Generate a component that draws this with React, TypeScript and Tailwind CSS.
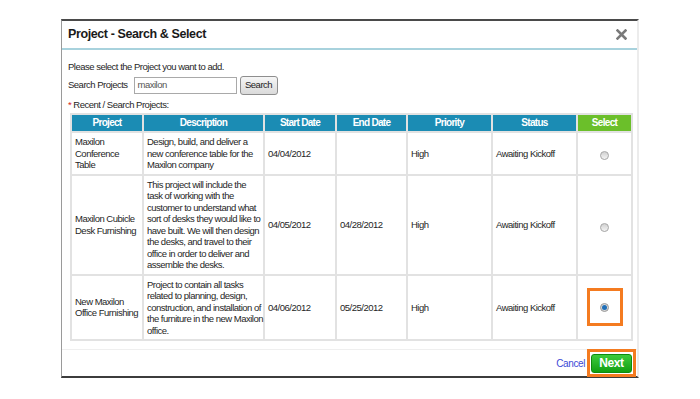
const font = "font-['Liberation_Sans',Arial,sans-serif]";

type Project = {
  name: string[];
  description: string[];
  start: string;
  end: string;
  priority: string;
  status: string;
  selected?: boolean;
};

// line breaks follow the screenshot
const projects: Project[] = [
  {
    name: ["Maxilon", "Conference", "Table"],
    description: ["Design, build, and deliver a", "new conference table for the", "Maxilon company"],
    start: "04/04/2012",
    end: "",
    priority: "High",
    status: "Awaiting Kickoff",
  },
  {
    name: ["Maxilon Cubicle", "Desk Furnishing"],
    description: [
      "This project will include the",
      "task of working with the",
      "customer to understand what",
      "sort of desks they would like to",
      "have built. We will then design",
      "the desks, and travel to their",
      "office in order to deliver and",
      "assemble the desks.",
    ],
    start: "04/05/2012",
    end: "04/28/2012",
    priority: "High",
    status: "Awaiting Kickoff",
  },
  {
    name: ["New Maxilon", "Office Furnishing"],
    description: [
      "Project to contain all tasks",
      "related to planning, design,",
      "construction, and installation of",
      "the furniture in the new Maxilon",
      "office.",
    ],
    start: "04/06/2012",
    end: "05/25/2012",
    priority: "High",
    status: "Awaiting Kickoff",
    selected: true,
  },
];

function Lines({ lines }: { lines: string[] }) {
  return (
    <>
      {lines.map((l) => (
        <span key={l} className="block whitespace-nowrap">
          {l}
        </span>
      ))}
    </>
  );
}

function Radio({ checked }: { checked?: boolean }) {
  if (checked) {
    return (
      <span className="flex h-[9px] w-[9px] items-center justify-center rounded-full border border-[#9a9a9a] bg-[#d8d8d8]">
        <span className="h-[5px] w-[5px] rounded-full bg-[#1f6fb8]" />
      </span>
    );
  }
  return <span className="block h-[9px] w-[9px] rounded-full border border-[#a8a8a8] bg-gradient-to-b from-[#d0d0d0] to-[#f4f4f4]" />;
}

function Row({ p }: { p: Project }) {
  const cell = "border-2 border-[#e2e2e2] px-[3px] py-[3px] align-middle";
  return (
    <tr>
      <td className={cell}>
        <Lines lines={p.name} />
      </td>
      <td className={cell}>
        <Lines lines={p.description} />
      </td>
      <td className={cell}>{p.start}</td>
      <td className={cell}>{p.end}</td>
      <td className={cell}>{p.priority}</td>
      <td className={`${cell} whitespace-nowrap`}>{p.status}</td>
      <td className={`${cell} text-center`}>
        {p.selected ? (
          <span className="inline-flex h-[38px] w-[36px] items-center justify-center border-[3px] border-[#f47b20] align-middle">
            <Radio checked />
          </span>
        ) : (
          <span className="inline-flex translate-y-[2px] align-middle">
            <Radio />
          </span>
        )}
      </td>
    </tr>
  );
}

export default function App() {
  const th = "border-2 border-[#e2e2e2] h-[18px] px-[2px] text-center font-bold text-white";
  return (
    <div className={`h-[399px] w-[700px] bg-white pl-[61px] pt-[19px] ${font}`}>
      <div className="flex h-[359px] w-[578px] flex-col border-b-2 border-l border-r-2 border-t-2 border-b-[#3c3c3c] border-l-[#9a9a9a] border-r-[#ececec] border-t-[#4a4a4a]">
        <div className="flex h-[29px] shrink-0 items-center justify-between border-b-2 border-[#a8d2dd] pl-[6px] pr-[10px]">
          <span className="text-[12.5px] font-bold tracking-[-0.4px] text-[#1a1a1a]">Project - Search &amp; Select</span>
          <svg width="11" height="11" viewBox="0 0 11 11">
            <path d="M1.5 1.5 L9.5 9.5 M9.5 1.5 L1.5 9.5" stroke="#7a7a7a" strokeWidth="2.6" strokeLinecap="square" />
          </svg>
        </div>

        <div className="flex shrink-0 flex-col pl-[6px] pt-[11px] text-[9.5px] leading-[11.5px] tracking-[-0.5px] text-[#262626]">
          <p>Please select the Project you want to add.</p>
          <div className="mt-[3px] flex h-[19px] items-center">
            <span>Search Projects</span>
            <div className="ml-[6px] flex h-[17px] w-[103px] items-center border border-[#a9a9a9] pl-[3px] text-[#555]">
              maxilon
            </div>
            <button className="ml-[3px] h-[19px] w-[38px] rounded-[3px] border border-[#8e8e8e] bg-gradient-to-b from-[#f6f6f6] to-[#dadada] text-[9.5px] tracking-[-0.5px] text-[#222]">
              Search
            </button>
          </div>
          <p className="mt-[4px]">
            <span className="text-[#d42020]">*</span> Recent / Search Projects:
          </p>

          <table className="ml-[2px] mt-[3px] w-[561px] table-fixed border-collapse">
            <colgroup>
              <col className="w-[72px]" />
              <col className="w-[121px]" />
              <col className="w-[72px]" />
              <col className="w-[71px]" />
              <col className="w-[85px]" />
              <col className="w-[85px]" />
              <col className="w-[55px]" />
            </colgroup>
            <thead>
              <tr className="bg-[#1b8cb4] text-[10px] tracking-[-0.7px]">
                <th className={th}>Project</th>
                <th className={th}>Description</th>
                <th className={th}>Start Date</th>
                <th className={th}>End Date</th>
                <th className={th}>Priority</th>
                <th className={th}>Status</th>
                <th className={`${th} bg-[#6bbf2a]`}>Select</th>
              </tr>
            </thead>
            <tbody>
              {projects.map((p) => (
                <Row key={p.start} p={p} />
              ))}
            </tbody>
          </table>
        </div>

        <div className="mt-auto flex h-[27px] shrink-0 items-center justify-end border-t border-[#efefef] pr-[1px]">
          <a className="mr-[2px] text-[10px] tracking-[-0.4px] text-[#3c4ad6]">Cancel</a>
          <div className="flex h-[28px] w-[49px] items-center justify-center border-[3px] border-[#f47b20] bg-white">
            <button className="flex h-[19px] w-[41px] items-center justify-center rounded-[3px] border border-[#0e8a0e] bg-gradient-to-b from-[#3ccb3c] to-[#0fa00f] text-[12px] font-bold tracking-[-0.4px] text-white">
              Next
            </button>
          </div>
        </div>
      </div>
    </div>
  );
}
